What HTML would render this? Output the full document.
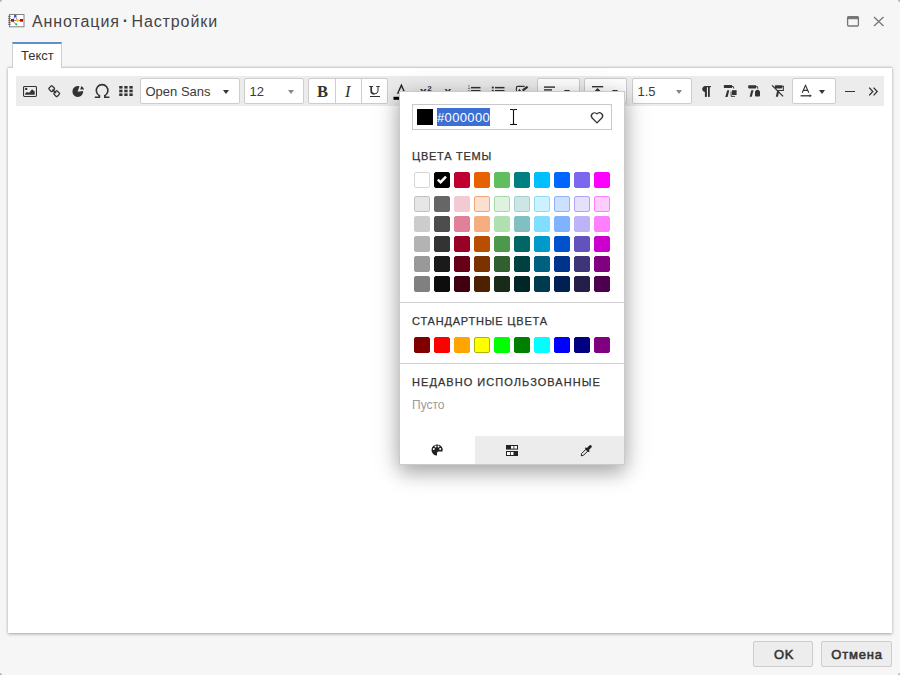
<!DOCTYPE html>
<html><head><meta charset="utf-8">
<style>
*{box-sizing:border-box;margin:0;padding:0}
html,body{width:900px;height:675px;overflow:hidden;background:#f6f6f6;font-family:"Liberation Sans",sans-serif;color:#333;position:relative}
.abs{position:absolute}
svg{position:absolute;overflow:visible}
#title{left:32px;top:13px;font-size:16px;color:#444;white-space:nowrap;letter-spacing:0.9px;word-spacing:-2.8px}
#tab{left:12px;top:42px;width:50px;height:26px;background:#fff;border:1px solid #cfcfcf;border-bottom:none;border-top:2px solid #6090c8;font-size:13px;color:#333;padding:4px 0 0 8px}
#panel{left:8px;top:67px;width:884px;height:566px;background:#fff;border-top:1px solid #cfcfcf;box-shadow:0 1px 3px rgba(0,0,0,.35)}
#toolbar{left:16px;top:76px;width:868px;height:30px;background:#ececec}
.sel{position:absolute;top:78px;height:26px;background:#fff;border:1px solid #cdcdcd;border-radius:2px;font-size:13px;color:#3a3a3a;padding:5px 0 0 4.5px}
.caret{position:absolute;width:0;height:0;border-left:3.5px solid transparent;border-right:3.5px solid transparent;border-top:4px solid #333}
#popup{left:399px;top:91px;width:226px;height:374px;background:#fff;border:1px solid #cacaca;box-shadow:0 8px 16px rgba(0,0,0,.2),0 4px 26px rgba(0,0,0,.22)}
.lbl{position:absolute;font-size:11px;font-weight:normal;-webkit-text-stroke:0.25px #333;letter-spacing:1.1px;color:#333;white-space:nowrap}
.sw{position:absolute;width:16px;height:16px;border-radius:2px}
.btn{position:absolute;top:641px;height:26px;background:#ededed;border:1px solid #cdcdcd;border-radius:2px;font-size:13px;font-weight:normal;-webkit-text-stroke:0.55px #333;color:#333;text-align:center;line-height:25px}
.sep{position:absolute;left:399px;width:226px;height:1px;background:#d0d0d0}
</style></head><body>
<!-- title icon -->
<svg style="left:8px;top:14px" width="17" height="14" viewBox="0 0 17 14">
 <rect x="1.5" y="0.5" width="14.5" height="12.3" fill="#fff" stroke="#777" stroke-width="0.9"/>
 <g stroke="#555" stroke-width="0.8"><line x1="0" y1="2.3" x2="2.8" y2="2.3"/><line x1="0" y1="4.3" x2="2.8" y2="4.3"/><line x1="0" y1="6.3" x2="2.8" y2="6.3"/><line x1="0" y1="8.3" x2="2.8" y2="8.3"/><line x1="0" y1="10.3" x2="2.8" y2="10.3"/></g>
 <path d="M5 6.3 L7.3 2 L9.5 6.3 M5 6.5 Q6.5 10 8.3 10.3" stroke="#666" stroke-width="0.7" fill="none"/>
 <line x1="4" y1="6.5" x2="14" y2="6.5" stroke="#666" stroke-width="0.7"/>
 <rect x="3" y="5" width="3" height="2.7" fill="#cc0000"/>
 <rect x="12" y="5" width="3" height="2.7" fill="#cc0000"/>
 <circle cx="7.3" cy="2" r="1.3" fill="#4040ff"/>
 <circle cx="9.5" cy="6.5" r="1.3" fill="#ffc020"/>
 <circle cx="8.3" cy="10.3" r="1.1" fill="#22bb55"/>
</svg>
<div class="abs" id="title">Аннотация <span style="position:relative;top:-1.2px;font-weight:bold;margin-left:0.3px">·</span> Настройки</div>
<!-- window buttons -->
<svg style="left:847px;top:16px" width="12" height="11" viewBox="0 0 12 11">
 <rect x="0.6" y="0.6" width="10.8" height="9.4" rx="1" fill="none" stroke="#777" stroke-width="1.3"/>
 <rect x="0.6" y="0.6" width="10.8" height="2.6" fill="#777"/>
</svg>
<svg style="left:873px;top:16px" width="12" height="11" viewBox="0 0 12 11">
 <path d="M1 1 L10.5 10 M10.5 1 L1 10" stroke="#777" stroke-width="1.3" fill="none"/>
</svg>

<div class="abs" id="panel"></div>
<div class="abs" id="tab">Текст</div>
<div class="abs" id="toolbar"></div>

<!-- toolbar icons -->
<svg style="left:23px;top:86px" width="14" height="11" viewBox="0 0 14 11">
 <rect x="0.55" y="0.55" width="12.9" height="9.9" rx="0.9" fill="none" stroke="#333" stroke-width="1.1"/>
 <circle cx="3.2" cy="2.9" r="1.2" fill="#333"/>
 <path d="M2 8.7 L2.2 7.8 Q3.3 5.6 4.6 6.2 L6.2 6.7 L9 3.2 L11.7 5.6 L11.7 8.7 Z" fill="#333"/>
</svg>
<svg style="left:48px;top:85px" width="13" height="13" viewBox="0 0 13 13">
 <g fill="none" stroke="#333" stroke-width="1.3">
 <rect x="1.4" y="1.4" width="4.6" height="4.6" rx="1" transform="rotate(45 3.7 3.7)"/>
 <rect x="6.4" y="6.4" width="4.6" height="4.6" rx="1" transform="rotate(45 8.7 8.7)"/>
 </g>
 <line x1="4.5" y1="4.5" x2="8" y2="8" stroke="#333" stroke-width="1.6"/>
</svg>
<svg style="left:72px;top:85px" width="13" height="12" viewBox="0 0 13 12">
 <path d="M5.6 6.8 L7.5 1.37 A5.4 5.4 0 1 0 11.17 5.9 Z" fill="#333"/>
 <path d="M9.4 1.1 L8.2 4.5 L12.1 4.5 Q11.4 2.4 9.4 1.1 Z" fill="#333"/>
</svg>
<svg style="left:94px;top:83px" width="16" height="16" viewBox="0 0 16 16">
 <path d="M5.4 12.6 A5.8 5.8 0 1 1 10.8 12.6" stroke="#333" stroke-width="1.6" fill="none"/>
 <path d="M5.4 12 L5.4 14.2 M10.8 12 L10.8 14.2" stroke="#333" stroke-width="1.6"/>
 <path d="M0.8 14.2 L6.1 14.2 M10.1 14.2 L15.4 14.2" stroke="#333" stroke-width="1.6"/>
</svg>
<svg style="left:119px;top:86px" width="14" height="10" viewBox="0 0 14 10"><g fill="#333"><rect x="0.2" y="0" width="3.3" height="2.6"/><rect x="5.3" y="0" width="3.3" height="2.6"/><rect x="10.4" y="0" width="3.3" height="2.6"/><rect x="0.2" y="3.7" width="3.3" height="2.6"/><rect x="5.3" y="3.7" width="3.3" height="2.6"/><rect x="10.4" y="3.7" width="3.3" height="2.6"/><rect x="0.2" y="7.4" width="3.3" height="2.6"/><rect x="5.3" y="7.4" width="3.3" height="2.6"/><rect x="10.4" y="7.4" width="3.3" height="2.6"/></g></svg>

<div class="sel" style="left:140px;width:100px">Open Sans<div class="caret" style="left:82px;top:11px"></div></div>
<div class="sel" style="left:244px;width:60px">12<div class="caret" style="left:42.5px;top:11px;border-top-color:#888"></div></div>

<!-- B I U group -->
<div class="abs" style="left:308px;top:78px;width:80px;height:26px;background:#fff;border:1px solid #cdcdcd;border-radius:2px"></div>
<div class="abs" style="left:335px;top:79px;width:1px;height:24px;background:#cdcdcd"></div>
<div class="abs" style="left:361px;top:79px;width:1px;height:24px;background:#cdcdcd"></div>
<div class="abs" style="left:317px;top:82px;font-family:'Liberation Serif',serif;font-weight:bold;font-size:16.5px;line-height:19px;color:#333">B</div>
<div class="abs" style="left:345px;top:82px;font-family:'Liberation Serif',serif;font-style:italic;font-size:16.5px;line-height:19px;color:#333">I</div>
<svg style="left:369px;top:85px" width="12" height="10" viewBox="0 0 12 10"><path d="M0.2 1.5 L4.1 1.5 M7.2 1.5 L10.8 1.5" stroke="#333" stroke-width="1" fill="none"/><path d="M2.2 1.2 L2.2 6 Q2.2 8.9 5.5 8.9" stroke="#333" stroke-width="1.7" fill="none"/><path d="M5.3 8.9 Q9 8.9 9 6 L9 1.2" stroke="#333" stroke-width="1" fill="none"/></svg>
<div class="abs" style="left:369.5px;top:96px;width:10.5px;height:1.1px;background:#333"></div>

<!-- A font color -->
<svg style="left:393px;top:83px" width="18" height="18" viewBox="0 0 18 18">
 <path d="M4.6 10.8 L8.4 2.2 L12.2 10.8" stroke="#222" stroke-width="1.4" fill="none" stroke-linejoin="miter"/>
 <rect x="0.5" y="13.8" width="16" height="3" fill="#000"/>
</svg>
<!-- x2 superscript -->
<div class="abs" style="left:420px;top:84.5px;font-size:12px;color:#333;font-weight:bold">x<span style="font-size:8px;position:relative;top:-4.8px;left:0.5px">2</span></div>
<div class="abs" style="left:444.5px;top:84.5px;font-size:12px;color:#333;font-weight:bold">x<span style="font-size:8.5px;position:relative;top:3px">2</span></div>
<!-- lists -->
<svg style="left:467px;top:84px" width="14" height="14" viewBox="0 0 14 14">
 <g fill="#333"><rect x="4" y="2.9" width="9.5" height="1.5"/><rect x="4" y="6" width="9.5" height="1.5"/><rect x="4" y="9.1" width="9.5" height="1.5"/></g>
 <text x="0.6" y="5.2" font-size="5" font-family="Liberation Sans" fill="#555">1</text><text x="0.6" y="9.5" font-size="5" font-family="Liberation Sans" fill="#555">2</text>
</svg>
<svg style="left:491px;top:84px" width="14" height="14" viewBox="0 0 14 14">
 <g fill="#333"><rect x="4" y="2.9" width="9.5" height="1.5"/><rect x="4" y="6" width="9.5" height="1.5"/><rect x="4" y="9.1" width="9.5" height="1.5"/>
 <circle cx="1.8" cy="3.6" r="1.1"/><circle cx="1.8" cy="6.8" r="1.1"/></g>
</svg>
<svg style="left:515px;top:84px" width="14" height="14" viewBox="0 0 14 14">
 <path d="M1.4 12 L1.4 3.6 Q1.4 2.4 2.6 2.4 L9.7 2.4" stroke="#333" stroke-width="1.1" fill="none"/>
 <path d="M2.8 7.2 L4.5 4.8 L6.2 7.2 Z" fill="#333"/>
 <path d="M7.6 6.6 L12.6 2.6" stroke="#333" stroke-width="2.2" fill="none"/>
</svg>
<!-- align dropdown -->
<div class="abs" style="left:537px;top:78px;width:43px;height:26px;background:#fff;border:1px solid #cdcdcd;border-radius:2px"></div>
<svg style="left:544px;top:86px" width="14" height="12" viewBox="0 0 14 12">
 <g fill="#333"><rect x="0" y="0.4" width="11" height="1.4"/><rect x="0" y="3.2" width="8" height="1.4"/><rect x="0" y="6" width="11" height="1.4"/><rect x="0" y="8.8" width="8" height="1.4"/></g>
</svg>
<div class="caret" style="left:563.5px;top:90px"></div>
<!-- spacing dropdown -->
<div class="abs" style="left:584px;top:78px;width:43px;height:26px;background:#fff;border:1px solid #cdcdcd;border-radius:2px"></div>
<svg style="left:591px;top:85px" width="14" height="13" viewBox="0 0 14 13">
 <rect x="1" y="1" width="11.2" height="1.4" fill="#333"/>
 <path d="M6.6 3 L2.8 7 L10.4 7 Z" fill="#333"/>
</svg>
<div class="caret" style="left:611.5px;top:90px"></div>
<!-- line height -->
<div class="sel" style="left:632px;width:60px">1.5<div class="caret" style="left:42.5px;top:11px;border-top-color:#888"></div></div>

<!-- pilcrow + rollers -->
<svg style="left:700px;top:85px" width="12" height="13" viewBox="0 0 12 13">
 <path d="M5 1 L11 1 L10.7 2.2 L5 2.2 Z" fill="#333"/>
 <path d="M5.5 1 A4 3.1 0 0 0 5.5 7.1 Z" fill="#333"/>
 <rect x="4.9" y="1" width="2" height="10.9" fill="#333"/>
 <rect x="8" y="1" width="1.8" height="10.9" fill="#333"/>
</svg>
<svg style="left:723px;top:84px" width="16" height="14" viewBox="0 0 16 14">
 <rect x="0.8" y="1" width="8.4" height="3.1" rx="0.8" fill="#333"/>
 <path d="M9 2.5 L10.3 2.5 L10.8 4.6" stroke="#333" stroke-width="0.9" fill="none"/>
 <path d="M4.2 6.2 L6.3 6.2 L4.6 12.9 L2.3 12.9 Z" fill="#333"/>
 <rect x="9" y="6.2" width="4.6" height="4.8" fill="#333"/>
 <path d="M8.1 7.5 L8.1 12.4 L12 12.4" stroke="#333" stroke-width="0.9" fill="none"/>
</svg>
<svg style="left:747px;top:84px" width="16" height="14" viewBox="0 0 16 14">
 <rect x="1.2" y="1.2" width="8" height="3.2" rx="0.8" fill="#333"/>
 <path d="M9 2.6 L10.5 2.6 L10.8 4.8" stroke="#333" stroke-width="0.9" fill="none"/>
 <path d="M4.3 6.3 L6.5 6.3 L4.8 12.7 L2.6 12.7 Z" fill="#333"/>
 <rect x="8" y="7" width="5" height="5.4" rx="0.9" fill="#333"/>
 <path d="M8.6 7.6 Q10.5 5.2 12.4 7.6" stroke="#333" stroke-width="1.1" fill="none"/>
</svg>
<svg style="left:771px;top:84px" width="15" height="14" viewBox="0 0 15 14">
 <rect x="3.8" y="1.2" width="7.4" height="3.2" rx="0.8" fill="#333"/>
 <path d="M11 2.4 L12.3 2.4 L12.3 6.5 L7.3 6.5" stroke="#333" stroke-width="1.1" fill="none"/>
 <path d="M6.2 6.5 L8.3 6.5 L7 12.7 L4.8 12.7 Z" fill="#333"/>
 <path d="M1.1 1.4 L12.1 12.4" stroke="#333" stroke-width="1.3"/>
</svg>
<!-- color dropdown -->
<div class="abs" style="left:792px;top:78px;width:44px;height:26px;background:#fff;border:1px solid #cdcdcd;border-radius:2px"></div>
<svg style="left:800px;top:84px" width="13" height="14" viewBox="0 0 13 14">
 <path d="M2.2 8.8 L5.5 1.3 L8.8 8.8 M3.4 6.4 L7.6 6.4" stroke="#333" stroke-width="1.1" fill="none"/>
 <path d="M0.6 11.8 L10.5 11.8" stroke="#333" stroke-width="1.3"/>
 <path d="M9.6 10.3 L11.8 11.8 L9.6 13.3 Z" fill="#333"/>
</svg>
<div class="caret" style="left:819px;top:90px"></div>
<div class="abs" style="left:845px;top:90.7px;width:10px;height:1.3px;background:#333"></div>
<svg style="left:868px;top:86px" width="11" height="10" viewBox="0 0 11 10">
 <path d="M1.2 1.6 L4.8 5.5 L1.2 9.4 M5.6 1.6 L9.2 5.5 L5.6 9.4" stroke="#333" stroke-width="1.3" fill="none"/>
</svg>

<!-- popup -->
<div class="abs" id="popup"></div>
<div class="abs" style="left:412px;top:104px;width:200px;height:26px;border:1px solid #c8c8c8;background:#fff"></div>
<div class="abs" style="left:417px;top:109px;width:16px;height:16px;background:#000"></div>
<div class="abs" style="left:437px;top:108px;width:53px;height:18px;background:#3b6fd4"></div>
<div class="abs" style="left:437px;top:110px;font-size:13px;color:#fff;line-height:16px;letter-spacing:0.35px">#000000</div>
<svg style="left:509px;top:109px" width="9" height="17" viewBox="0 0 9 17">
 <path d="M1 0.5 L3.5 0.5 Q4.5 0.5 4.5 1.5 L4.5 14.5 Q4.5 15.5 3.5 15.5 L1 15.5 M8 0.5 L5.5 0.5 Q4.5 0.5 4.5 1.5 M4.5 14.5 Q4.5 15.5 5.5 15.5 L8 15.5" stroke="#111" stroke-width="1.1" fill="none"/>
</svg>
<svg style="left:590px;top:111px" width="14" height="13" viewBox="0 0 14 13">
 <path d="M7 11.9 L2.2 7 A2.9 2.9 0 0 1 7 2.9 A2.9 2.9 0 0 1 11.8 7 Z" stroke="#333" stroke-width="1.3" fill="none" stroke-linejoin="round"/>
</svg>
<div class="lbl" style="left:412px;top:150px;letter-spacing:0.75px">ЦВЕТА ТЕМЫ</div>
<div class="sw" style="left:414px;top:172px;background:#ffffff;border:1px solid #d6d6d6"></div>
<div class="sw" style="left:434px;top:172px;background:#000000;border:1px solid #000000"></div>
<div class="sw" style="left:454px;top:172px;background:#c00030;border:1px solid #c00030"></div>
<div class="sw" style="left:474px;top:172px;background:#e86100;border:1px solid #e86100"></div>
<div class="sw" style="left:494px;top:172px;background:#5fbf5f;border:1px solid #5fbf5f"></div>
<div class="sw" style="left:514px;top:172px;background:#008080;border:1px solid #008080"></div>
<div class="sw" style="left:534px;top:172px;background:#00bfff;border:1px solid #00bfff"></div>
<div class="sw" style="left:554px;top:172px;background:#0066ff;border:1px solid #0066ff"></div>
<div class="sw" style="left:574px;top:172px;background:#7b68ee;border:1px solid #7b68ee"></div>
<div class="sw" style="left:594px;top:172px;background:#ff00ff;border:1px solid #ff00ff"></div>
<div class="sw" style="left:414px;top:196px;background:#e6e6e6;border:1px solid #c2c2c2"></div>
<div class="sw" style="left:434px;top:196px;background:#666666;border:1px solid #666666"></div>
<div class="sw" style="left:454px;top:196px;background:#f2cad4;border:1px solid #f2cad4"></div>
<div class="sw" style="left:474px;top:196px;background:#fce0cf;border:1px solid #f2a777"></div>
<div class="sw" style="left:494px;top:196px;background:#dff2df;border:1px solid #a6dca6"></div>
<div class="sw" style="left:514px;top:196px;background:#cce6e6;border:1px solid #a7cfcf"></div>
<div class="sw" style="left:534px;top:196px;background:#ccf2ff;border:1px solid #8fdcf7"></div>
<div class="sw" style="left:554px;top:196px;background:#cce0ff;border:1px solid #8db6fa"></div>
<div class="sw" style="left:574px;top:196px;background:#e5e1fc;border:1px solid #b0a4f5"></div>
<div class="sw" style="left:594px;top:196px;background:#ffccff;border:1px solid #ff80ff"></div>
<div class="sw" style="left:414px;top:216px;background:#cccccc;border:1px solid #cccccc"></div>
<div class="sw" style="left:434px;top:216px;background:#4d4d4d;border:1px solid #4d4d4d"></div>
<div class="sw" style="left:454px;top:216px;background:#e08099;border:1px solid #e08099"></div>
<div class="sw" style="left:474px;top:216px;background:#f4ae80;border:1px solid #f4ae80"></div>
<div class="sw" style="left:494px;top:216px;background:#b0e0b0;border:1px solid #b0e0b0"></div>
<div class="sw" style="left:514px;top:216px;background:#80c0c0;border:1px solid #80c0c0"></div>
<div class="sw" style="left:534px;top:216px;background:#80dfff;border:1px solid #80dfff"></div>
<div class="sw" style="left:554px;top:216px;background:#80b3ff;border:1px solid #80b3ff"></div>
<div class="sw" style="left:574px;top:216px;background:#bdb4f7;border:1px solid #bdb4f7"></div>
<div class="sw" style="left:594px;top:216px;background:#ff80ff;border:1px solid #ff80ff"></div>
<div class="sw" style="left:414px;top:236px;background:#b3b3b3;border:1px solid #b3b3b3"></div>
<div class="sw" style="left:434px;top:236px;background:#333333;border:1px solid #333333"></div>
<div class="sw" style="left:454px;top:236px;background:#990026;border:1px solid #990026"></div>
<div class="sw" style="left:474px;top:236px;background:#b94d00;border:1px solid #b94d00"></div>
<div class="sw" style="left:494px;top:236px;background:#4c994c;border:1px solid #4c994c"></div>
<div class="sw" style="left:514px;top:236px;background:#006666;border:1px solid #006666"></div>
<div class="sw" style="left:534px;top:236px;background:#0099cc;border:1px solid #0099cc"></div>
<div class="sw" style="left:554px;top:236px;background:#0052cc;border:1px solid #0052cc"></div>
<div class="sw" style="left:574px;top:236px;background:#6252be;border:1px solid #6252be"></div>
<div class="sw" style="left:594px;top:236px;background:#cc00cc;border:1px solid #cc00cc"></div>
<div class="sw" style="left:414px;top:256px;background:#999999;border:1px solid #999999"></div>
<div class="sw" style="left:434px;top:256px;background:#1a1a1a;border:1px solid #1a1a1a"></div>
<div class="sw" style="left:454px;top:256px;background:#660019;border:1px solid #660019"></div>
<div class="sw" style="left:474px;top:256px;background:#7a3300;border:1px solid #7a3300"></div>
<div class="sw" style="left:494px;top:256px;background:#306030;border:1px solid #306030"></div>
<div class="sw" style="left:514px;top:256px;background:#004040;border:1px solid #004040"></div>
<div class="sw" style="left:534px;top:256px;background:#006080;border:1px solid #006080"></div>
<div class="sw" style="left:554px;top:256px;background:#00338a;border:1px solid #00338a"></div>
<div class="sw" style="left:574px;top:256px;background:#3e3478;border:1px solid #3e3478"></div>
<div class="sw" style="left:594px;top:256px;background:#800080;border:1px solid #800080"></div>
<div class="sw" style="left:414px;top:276px;background:#808080;border:1px solid #808080"></div>
<div class="sw" style="left:434px;top:276px;background:#0d0d0d;border:1px solid #0d0d0d"></div>
<div class="sw" style="left:454px;top:276px;background:#40000f;border:1px solid #40000f"></div>
<div class="sw" style="left:474px;top:276px;background:#4d2000;border:1px solid #4d2000"></div>
<div class="sw" style="left:494px;top:276px;background:#182a18;border:1px solid #182a18"></div>
<div class="sw" style="left:514px;top:276px;background:#002626;border:1px solid #002626"></div>
<div class="sw" style="left:534px;top:276px;background:#003a4d;border:1px solid #003a4d"></div>
<div class="sw" style="left:554px;top:276px;background:#001f52;border:1px solid #001f52"></div>
<div class="sw" style="left:574px;top:276px;background:#241f48;border:1px solid #241f48"></div>
<div class="sw" style="left:594px;top:276px;background:#4d004d;border:1px solid #4d004d"></div>
<div class="sw" style="left:414px;top:337px;background:#800000;border:1px solid #800000"></div>
<div class="sw" style="left:434px;top:337px;background:#ff0000;border:1px solid #ff0000"></div>
<div class="sw" style="left:454px;top:337px;background:#ffa500;border:1px solid #ffa500"></div>
<div class="sw" style="left:474px;top:337px;background:#ffff00;border:1px solid #b3b300"></div>
<div class="sw" style="left:494px;top:337px;background:#00ff00;border:1px solid #00ff00"></div>
<div class="sw" style="left:514px;top:337px;background:#008000;border:1px solid #008000"></div>
<div class="sw" style="left:534px;top:337px;background:#00ffff;border:1px solid #00ffff"></div>
<div class="sw" style="left:554px;top:337px;background:#0000ff;border:1px solid #0000ff"></div>
<div class="sw" style="left:574px;top:337px;background:#000080;border:1px solid #000080"></div>
<div class="sw" style="left:594px;top:337px;background:#800080;border:1px solid #800080"></div>
<svg style="left:434px;top:172px" width="16" height="16" viewBox="0 0 16 16">
 <path d="M3.8 7.6 L6.6 10.2 L12 4.6" stroke="#fff" stroke-width="2.4" fill="none"/>
</svg>
<div class="sep" style="top:302px"></div>
<div class="lbl" style="left:412px;top:315px;letter-spacing:0.81px">СТАНДАРТНЫЕ ЦВЕТА</div>
<div class="sep" style="top:363px"></div>
<div class="lbl" style="left:412px;top:376px;letter-spacing:1.05px">НЕДАВНО ИСПОЛЬЗОВАННЫЕ</div>
<div class="abs" style="left:412px;top:398px;font-size:12px;color:#9a9a9a">Пусто</div>
<div class="abs" style="left:475px;top:436px;width:149px;height:28px;background:#ececec"></div>
<!-- palette icon -->
<svg style="left:431px;top:444px" width="12" height="12" viewBox="0 0 12 12">
 <path d="M6 0.5 A5.5 5.5 0 0 0 6 11.5 L6 9 Q6 7.5 7.5 7.5 L11.5 7.5 A5.5 5.5 0 0 0 6 0.5 Z" fill="#222"/>
 <g fill="#fff"><circle cx="2.8" cy="5" r="1"/><circle cx="4.5" cy="2.6" r="1"/><circle cx="7.5" cy="2.6" r="1"/><circle cx="9.2" cy="5" r="1"/></g>
</svg>
<svg style="left:506px;top:445px" width="12" height="11" viewBox="0 0 12 11">
 <rect x="0" y="0" width="12" height="4.6" fill="#222"/>
 <rect x="0" y="6" width="12" height="5" fill="#222"/>
 <rect x="5" y="1" width="2.5" height="2.6" fill="#fff"/><rect x="8.3" y="1" width="2.7" height="2.6" fill="#fff"/>
 <rect x="1" y="7" width="3.2" height="3" fill="#fff"/><rect x="5" y="7" width="2.5" height="3" fill="#fff"/>
</svg>
<svg style="left:580px;top:444px" width="13" height="13" viewBox="0 0 13 13">
 <path d="M1.2 11.8 L1.7 9.5 L6.3 4.9 L8.1 6.7 L3.5 11.3 Z" stroke="#222" stroke-width="1" fill="none" stroke-linejoin="round"/>
 <path d="M5.4 3.8 L9.2 7.6" stroke="#222" stroke-width="1.5"/>
 <path d="M7.4 5.6 L10.4 2.6" stroke="#222" stroke-width="2.8" stroke-linecap="round"/>
</svg>

<div class="btn" style="left:753px;width:60px;letter-spacing:0.6px;padding-left:2px">OK</div>
<div class="btn" style="left:821px;width:71px;letter-spacing:0.8px;padding-left:1px">Отмена</div>
<div class="abs" style="left:0;top:0;width:2px;height:2px;background:#b4b4b4;border-radius:0 0 2px 0"></div>
<div class="abs" style="left:898px;top:0;width:2px;height:2px;background:#b4b4b4;border-radius:0 0 0 2px"></div>
<div class="abs" style="left:898px;top:673px;width:2px;height:2px;background:#b4b4b4;border-radius:2px 0 0 0"></div>
<div class="abs" style="left:0;top:673px;width:2px;height:2px;background:#b4b4b4;border-radius:0 2px 0 0"></div>
</body></html>
